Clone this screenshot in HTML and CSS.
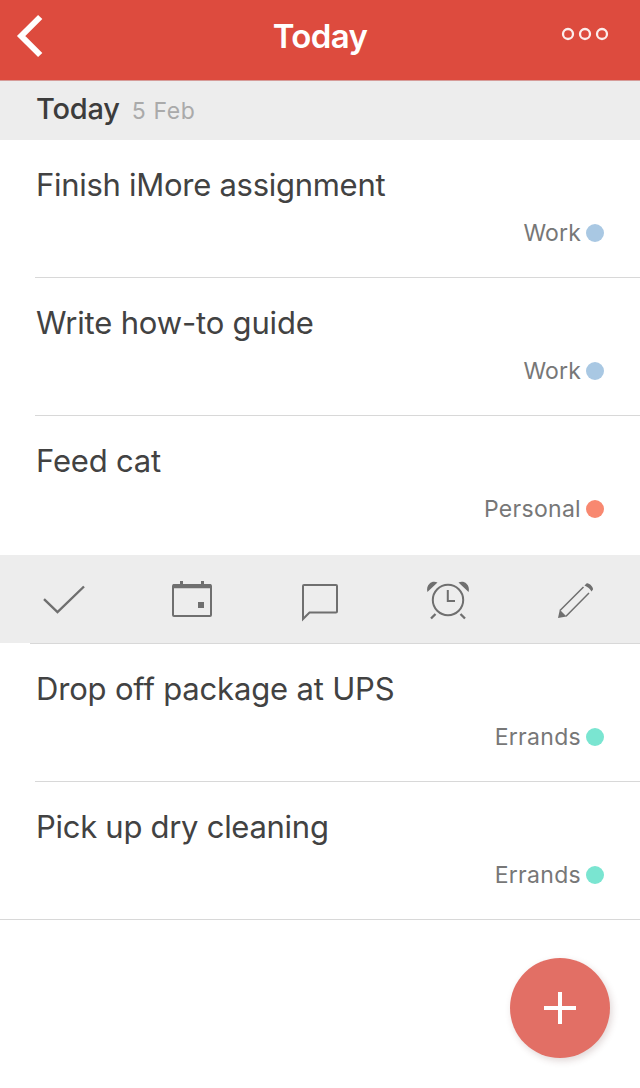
FILE: index.html
```html
<!DOCTYPE html>
<html lang="en">
<head>
<meta charset="utf-8">
<title>Today</title>
<link rel="stylesheet" href="styles.css">
</head>
<body>
<main class="app">
  <header class="navbar">
    <svg class="back" width="32" height="48" viewBox="0 0 32 48" fill="none" stroke="#fff" stroke-width="6"><path d="M26.200 5 7.200 24 26.200 43"/></svg>
    <h1 class="title">Today</h1>
    <svg class="more" width="48" height="16" viewBox="0 0 48 16" fill="none" stroke="#fff" stroke-opacity=".9" stroke-width="2.3"><circle cx="7" cy="8" r="5"/><circle cx="24" cy="8" r="5"/><circle cx="41" cy="8" r="5"/></svg>
  </header>
  <div class="section"><h2 class="section-day">Today</h2><span class="section-date">5 Feb</span></div>
  <ul class="tasks">
    <li class="task"><span class="name">Finish iMore assignment</span><span class="tag">Work<i class="dot work"></i></span></li>
    <li class="task"><span class="name loose">Write how-to guide</span><span class="tag">Work<i class="dot work"></i></span></li>
    <li class="task selected"><span class="name loose">Feed cat</span><span class="tag long">Personal<i class="dot personal"></i></span></li>
  </ul>
  <nav class="actions">
    <svg viewBox="0 0 48 48" fill="none" stroke="#6f6f6f" stroke-width="2.4"><path d="M4 23.200 17.500 36.200 44 10.500"/></svg>
    <svg viewBox="0 0 48 48" fill="none" stroke="#6f6f6f" stroke-width="2"><rect x="5" y="9" width="38" height="31" rx="1"/><path d="M5 10.200h38" stroke-width="4"/><path d="M13.500 5v5M34.500 5v5" stroke-width="3"/><rect x="30" y="26" width="6" height="6" fill="#6f6f6f" stroke="none"/></svg>
    <svg viewBox="0 0 48 48" fill="none" stroke="#6f6f6f" stroke-width="2"><path d="M7 43V10q0-1 1-1H40q1 0 1 1V35.500q0 1-1 1H13.500Z"/></svg>
    <svg viewBox="0 0 48 48" fill="none" stroke="#6f6f6f" stroke-width="2"><circle cx="24" cy="24" r="15.200"/><path d="M23.800 14V25H31"/><path d="M11.500 38 7 42.500M36.500 38 41 42.500" stroke-width="2.300"/><path d="M3.400 16C2.500 12.500 3.500 9.500 5.500 7.700C7.500 5.800 10.500 5.300 13.500 6.500ZM44.600 16C45.500 12.500 44.500 9.500 42.500 7.700C40.500 5.800 37.500 5.300 34.500 6.500Z" fill="#6f6f6f" stroke="none"/></svg>
    <svg viewBox="0 0 48 48" fill="none" stroke="#6f6f6f" stroke-width="1.500"><path d="M8 34.500 31.500 11M14 40.200 37 17"/><path d="M7.800 33.800 14.500 40.500 6 42ZM32.500 9.500 34.500 7.500C36.500 6.300 41.500 11 41 13.500L39.500 15.500Q37.500 11.500 32.500 9.500Z" fill="#6f6f6f" stroke="none"/></svg>
  </nav>
  <ul class="tasks rest">
    <li class="task"><span class="name loose">Drop off package at UPS</span><span class="tag long">Errands<i class="dot errands"></i></span></li>
    <li class="task last"><span class="name">Pick up dry cleaning</span><span class="tag long">Errands<i class="dot errands"></i></span></li>
  </ul>
  <footer class="footer">
    <button class="add" aria-label="Add task"><svg width="32" height="32" viewBox="0 0 32 32" stroke="#fff" stroke-width="4"><path d="M0 16H32M16 0V32"/></svg></button>
  </footer>
</main>
</body>
</html>
```
FILE: styles.css
```css
* { box-sizing: border-box; }
body { margin: 0; background: #fff; color: #424242; font-family: Inter, "Liberation Sans", sans-serif; }
.app { width: 640px; height: 1088px; overflow: hidden; display: flex; flex-direction: column; }
h1, h2, ul { margin: 0; padding: 0; list-style: none; }
svg { display: block; }

.navbar { height: 81px; flex: none; display: grid; grid-template-columns: 1fr auto 1fr; align-items: start; padding: 12px 31px 0 14px; background: #dd4b3e; border-bottom: 1px solid #d69c99; }
.title { color: #fff; font-size: 33px; font-weight: 600; letter-spacing: -.6px; line-height: 40px; padding: 4px 0 0 17px; }
.more { justify-self: end; margin-top: 14px; }

.section { height: 59px; flex: none; display: flex; align-items: baseline; gap: 12px; padding: 8px 36px 0; background: #ededed; }
.section-day { font-size: 29px; font-weight: 500; letter-spacing: -.2px; line-height: 40px; color: #3c3c3c; }
.section-date { font-size: 23px; color: #aaa; letter-spacing: .6px; }

.task { height: 138px; display: flex; flex-direction: column; margin-left: 35px; padding: 25px 36px 0 1px; border-bottom: 1px solid #d8d8d8; }
.selected { height: 139px; border-bottom: 0; }
.name { font-size: 31px; line-height: 40px; letter-spacing: -.28px; }
.loose { letter-spacing: -.18px; }
.tag { display: flex; align-items: center; justify-content: flex-end; gap: 5px; margin-top: 13px; font-size: 23px; line-height: 30px; color: #777; letter-spacing: .15px; }
.long { letter-spacing: .3px; }
.dot { width: 18px; height: 18px; border-radius: 50%; }
.work { background: #a9c8e3; }
.personal { background: #f88870; }
.errands { background: #7ae5d1; }

.actions { height: 88px; flex: none; display: grid; grid-template-columns: repeat(5, 1fr); justify-items: center; padding-top: 21px; background: #ededed; }
.actions svg { width: 48px; height: 48px; }
.rest::before { content: ""; display: block; height: 1px; margin-left: 30px; background: #d8d8d8; }
.last { margin-left: 0; padding-left: 36px; }

.footer { display: flex; justify-content: flex-end; padding: 38px 30px 0; }
.add { width: 100px; height: 100px; display: grid; place-items: center; padding: 0; border: 0; border-radius: 50%; background: #e26f65; box-shadow: 2px 3px 7px rgba(90, 40, 40, .18); }
```
